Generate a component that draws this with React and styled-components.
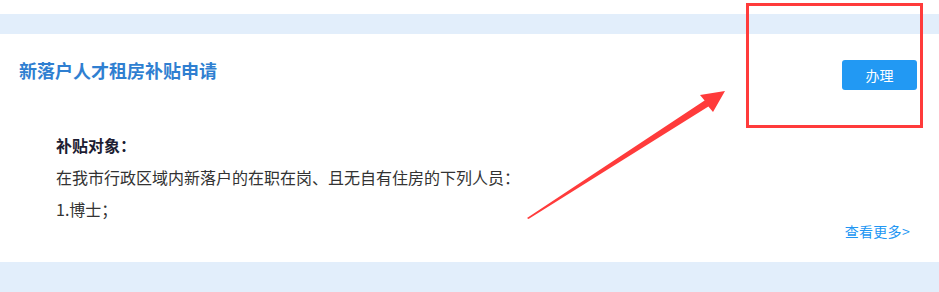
import React from 'react';
import styled, { createGlobalStyle } from 'styled-components';

const GlobalStyle = createGlobalStyle`
  body {
    margin: 0;
    background: #ffffff;
    font-family: "Noto Sans CJK SC", "Noto Sans", sans-serif;
  }
`;

const Page = styled.div`
  position: relative;
  width: 939px;
  height: 292px;
  padding-top: 14px;
  box-sizing: border-box;
  overflow: hidden;
`;

const Band = styled.div`
  background: #e2eefb;
  padding: 20px 0 30px;
`;

const Card = styled.div`
  background: #ffffff;
  padding: 26px 22px 21px 19px;
`;

const Header = styled.div`
  display: flex;
  justify-content: space-between;
  align-items: flex-start;
`;

const Title = styled.h2`
  margin: 0;
  font-size: 18px;
  line-height: 21px;
  font-weight: 700;
  color: #2f7fd1;
`;

const ActionButton = styled.button`
  width: 75px;
  height: 30px;
  border: none;
  border-radius: 3px;
  background: #2299f3;
  color: #ffffff;
  font-family: inherit;
  font-size: 14px;
  cursor: pointer;
`;

const Body = styled.div`
  margin-top: 39px;
  padding-left: 37px;
`;

const Line = styled.p`
  margin: 0;
  font-size: 16px;
  line-height: 32px;
  color: ${(p) => (p.strong ? '#1d1d33' : '#333333')};
  font-weight: ${(p) => (p.strong ? 700 : 400)};
`;

const Footer = styled.div`
  display: flex;
  justify-content: flex-end;
  margin-top: -4px;
  padding-right: 7px;
`;

const MoreLink = styled.a`
  font-size: 14px;
  line-height: 20px;
  letter-spacing: 0.3px;
  color: #2196f3;
  text-decoration: none;
`;

const Highlight = styled.div`
  position: absolute;
  left: 746px;
  top: 3px;
  width: 177px;
  height: 125px;
  border: 3px solid #ff3b3b;
  box-sizing: border-box;
  pointer-events: none;
`;

const Overlay = styled.svg`
  position: absolute;
  left: 0;
  top: 0;
  pointer-events: none;
`;

export default function App() {
  return (
    <>
      <GlobalStyle />
      <Page>
        <Band>
          <Card>
            <Header>
              <Title>新落户人才租房补贴申请</Title>
              <ActionButton>办理</ActionButton>
            </Header>
            <Body>
              <Line strong>补贴对象：</Line>
              <Line>在我市行政区域内新落户的在职在岗、且无自有住房的下列人员：</Line>
              <Line>1.博士；</Line>
            </Body>
            <Footer>
              <MoreLink href="#">查看更多&gt;</MoreLink>
            </Footer>
          </Card>
        </Band>
        <Highlight />
        <Overlay width="939" height="292" viewBox="0 0 939 292">
          <polygon
            points="527,218 704.6,100.6 700,95 725,91 713,112 708.4,106.4 528.5,219"
            fill="#ff3b3b"
          />
        </Overlay>
      </Page>
    </>
  );
}
